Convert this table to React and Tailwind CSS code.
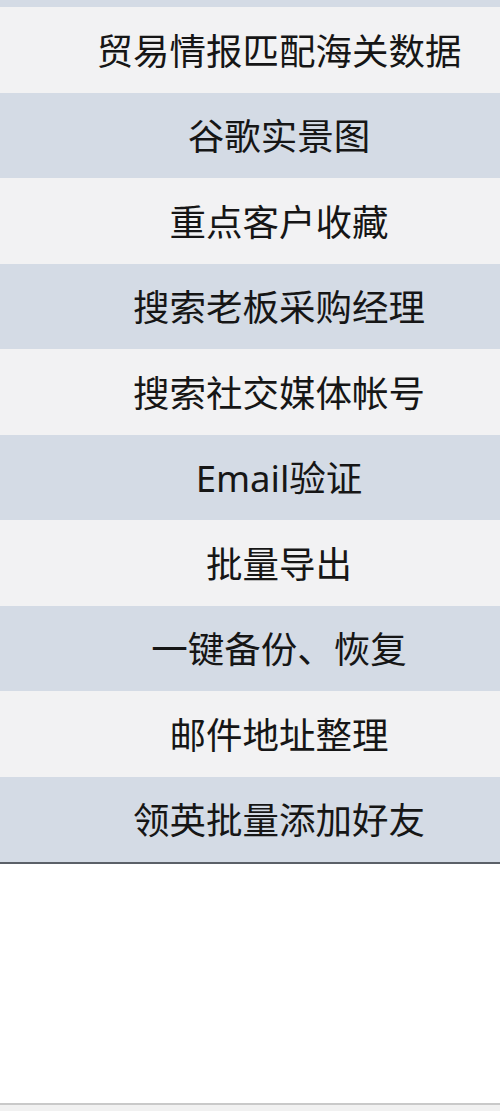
import React from 'react';

const items = [
  '贸易情报匹配海关数据',
  '谷歌实景图',
  '重点客户收藏',
  '搜索老板采购经理',
  '搜索社交媒体帐号',
  'Email验证',
  '批量导出',
  '一键备份、恢复',
  '邮件地址整理',
  '领英批量添加好友',
];

const App = () => {
  return (
    <div
      className="w-[500px] h-[1111px] bg-white flex flex-col overflow-hidden"
      style={{ fontFamily: '"Noto Sans", "Noto Sans CJK SC", sans-serif' }}
    >
      <div className="h-[7px] bg-[#d4dbe5] shrink-0" />
      <ul className="flex flex-col border-b-2 border-[#5b6068]">
        {items.map((label, i) => (
          <li
            key={i}
            className={`h-[85.5px] flex items-center justify-center pl-[58px] pt-[2px] text-[36.5px] leading-none text-[#161616] ${
              i % 2 === 0 ? 'bg-[#f2f2f3]' : 'bg-[#d4dbe5]'
            }`}
          >
            {label}
          </li>
        ))}
      </ul>
      <div className="flex-1 bg-white" />
      <div className="h-[2px] bg-[#c9c9c9] shrink-0" />
      <div className="h-[6px] bg-[#f1f1f1] shrink-0" />
    </div>
  );
};

export default App;
